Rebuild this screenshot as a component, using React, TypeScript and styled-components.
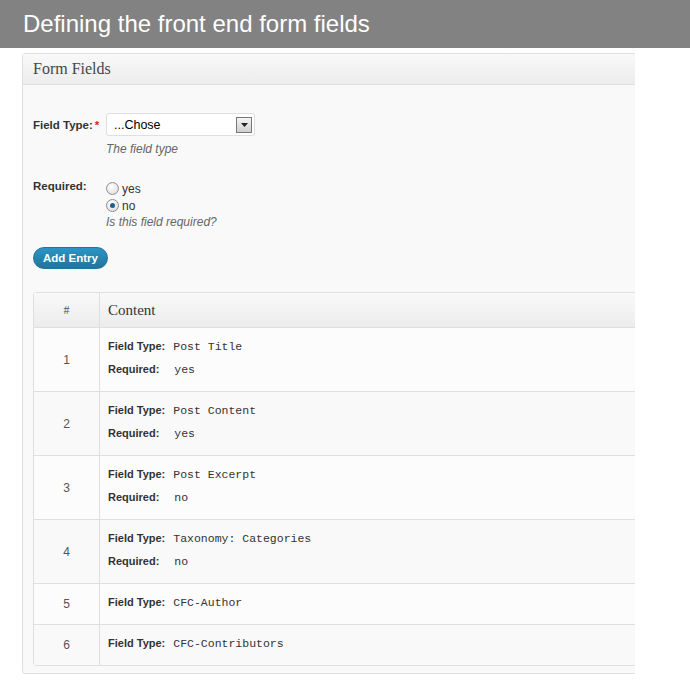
import styled, { createGlobalStyle } from 'styled-components'

const GlobalStyle = createGlobalStyle`
    html, body {
        margin: 0;
        padding: 0;
        background: #ffffff;
        font-family: 'Liberation Sans', Arial, sans-serif;
    }
`

const Banner = styled.div`
    height: 48px;
    background: #828282;
    color: #ffffff;
    font-size: 24px;
    line-height: 48px;
    padding-left: 23px;
`

const Frame = styled.div`
    width: 613px;
    margin: 5px 0 0 22px;
    overflow: hidden;
`

const Panel = styled.div`
    width: 700px;
    background: #f9f9f9;
    border: 1px solid #dfdfdf;
    border-radius: 3px;
    box-sizing: border-box;
`

const PanelHeader = styled.div`
    height: 30px;
    line-height: 30px;
    padding-left: 10px;
    background: linear-gradient(#f9f9f9, #ececec);
    border-bottom: 1px solid #dfdfdf;
    font-family: 'Liberation Serif', Georgia, serif;
    font-size: 16px;
    color: #464646;
`

const PanelBody = styled.div`
    padding: 28px 10px 7px 10px;
`

const FieldRow = styled.div<{ $gap?: number }>`
    display: grid;
    grid-template-columns: 73px 1fr;
    margin-bottom: ${p => p.$gap ?? 18}px;
`

const Label = styled.div<{ $top?: number }>`
    font-size: 11.5px;
    font-weight: bold;
    color: #333;
    padding-top: ${p => p.$top ?? 6}px;
`

const Star = styled.span`
    color: #e2231a;
    margin-left: 2px;
`

const Select = styled.div`
    width: 138px;
    height: 21px;
    border: 1px solid #dfdfdf;
    border-radius: 3px;
    background: #fff;
    display: flex;
    align-items: center;
    justify-content: space-between;
    padding: 0 2px 0 7px;
    box-sizing: content-box;
    font-size: 12.5px;
    color: #000;
`

const Arrow = styled.div`
    width: 14px;
    height: 14px;
    border: 1px solid #777;
    background: linear-gradient(#f4f4f4, #cfcfcf);
    display: flex;
    align-items: center;
    justify-content: center;
`

const Hint = styled.div<{ $top?: number }>`
    font-size: 12px;
    font-style: italic;
    color: #666;
    margin-top: ${p => p.$top ?? 6}px;
`

const RadioLine = styled.label`
    display: flex;
    align-items: center;
    gap: 3px;
    font-size: 12px;
    color: #333;
    height: 17px;
`

const Radio = styled.span<{ $checked?: boolean }>`
    width: 11px;
    height: 11px;
    border-radius: 50%;
    border: 1px solid #8f8f8f;
    background: radial-gradient(circle at 40% 35%, #ffffff, #d8d8d8);
    display: flex;
    align-items: center;
    justify-content: center;
    &::after {
        content: '';
        display: ${p => (p.$checked ? 'block' : 'none')};
        width: 5px;
        height: 5px;
        border-radius: 50%;
        background: #1f5f8a;
    }
`

const Button = styled.button`
    display: block;
    height: 22px;
    padding: 0 9px;
    border: 1px solid #21759b;
    border-radius: 11px;
    background: linear-gradient(#2a95c5, #21759b);
    color: #fff;
    font-family: 'Liberation Sans', Arial, sans-serif;
    font-size: 11.5px;
    font-weight: bold;
    margin: 5px 0 23px 0;
`

const Table = styled.div`
    border: 1px solid #dfdfdf;
    border-radius: 3px;
    background: #fcfcfc;
`

const Row = styled.div<{ $head?: boolean; $alt?: boolean }>`
    display: grid;
    grid-template-columns: 66px 1fr;
    border-top: ${p => (p.$head ? 'none' : '1px solid #dfdfdf')};
    background: ${p => (p.$head ? 'linear-gradient(#f9f9f9, #ececec)' : p.$alt ? '#f9f9f9' : '#fcfcfc')};
`

const NumCell = styled.div<{ $head?: boolean }>`
    display: flex;
    align-items: center;
    justify-content: center;
    border-right: 1px solid #dfdfdf;
    font-size: 12px;
    color: #555;
    font-family: ${p => (p.$head ? "'Liberation Serif', Georgia, serif" : "'Liberation Sans', Arial, sans-serif")};
`

const HeadCell = styled.div`
    height: 34px;
    line-height: 34px;
    padding-left: 8px;
    font-family: 'Liberation Serif', Georgia, serif;
    font-size: 15px;
    color: #333;
`

const ContentCell = styled.div`
    padding: 5px 8px 12px 8px;
`

const Line = styled.div`
    line-height: 23px;
    height: 23px;
    white-space: nowrap;
`

const Key = styled.span`
    display: inline-block;
    font-size: 11px;
    font-weight: bold;
    color: #333;
    margin-right: 8px;
`

const Value = styled.span`
    font-family: 'Liberation Mono', 'Courier New', monospace;
    font-size: 11.5px;
    color: #333;
`

const entries = [
    { type: 'Post Title', req: 'yes' },
    { type: 'Post Content', req: 'yes' },
    { type: 'Post Excerpt', req: 'no' },
    { type: 'Taxonomy: Categories', req: 'no' },
    { type: 'CFC-Author' },
    { type: 'CFC-Contributors' },
]

const App = () => {
  return (
    <>
      <GlobalStyle />
      <Banner>{'Defining the front end form fields'}</Banner>
      <Frame>
        <Panel>
          <PanelHeader>{'Form Fields'}</PanelHeader>
          <PanelBody>
            <FieldRow $gap={24}>
              <Label>{'Field Type:'}<Star>{'*'}</Star></Label>
              <div>
                <Select>
                  <span>{'...Chose'}</span>
                  <Arrow>
                    <svg width="7" height="4" viewBox="0 0 7 4"><path d="M0 0h7L3.5 4z" fill="#222" /></svg>
                  </Arrow>
                </Select>
                <Hint>{'The field type'}</Hint>
              </div>
            </FieldRow>

            <FieldRow>
              <Label $top={0}>{'Required:'}</Label>
              <div>
                <RadioLine><Radio />{'yes'}</RadioLine>
                <RadioLine><Radio $checked />{'no'}</RadioLine>
                <Hint $top={1}>{'Is this field required?'}</Hint>
              </div>
            </FieldRow>

            <Button>{'Add Entry'}</Button>

            <Table>
              <Row $head>
                <NumCell $head>{'#'}</NumCell>
                <HeadCell>{'Content'}</HeadCell>
              </Row>
              {entries.map((e, i) => (
                <Row key={i} $alt={i % 2 === 1}>
                  <NumCell>{i + 1}</NumCell>
                  <ContentCell>
                    <Line><Key>{'Field Type:'}</Key><Value>{e.type}</Value></Line>
                    {e.req && <Line><Key>{'Required:'}</Key><Value>{' ' + e.req}</Value></Line>}
                  </ContentCell>
                </Row>
              ))}
            </Table>
          </PanelBody>
        </Panel>
      </Frame>
    </>
  )
}

export default App
